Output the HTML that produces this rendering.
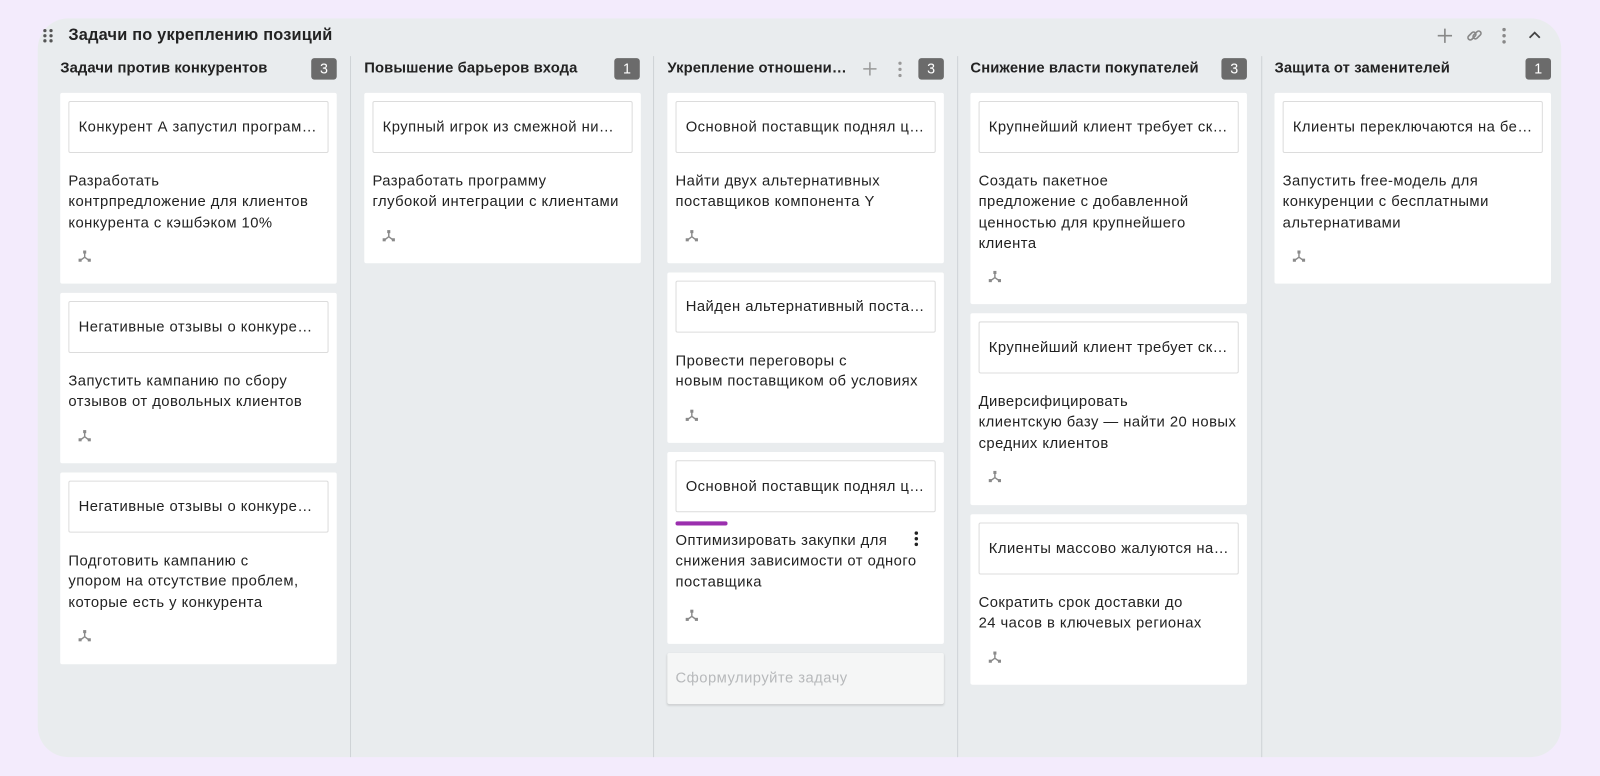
<!DOCTYPE html>
<html><head><meta charset="utf-8">
<style>
*{box-sizing:border-box;margin:0;padding:0}
body{width:1600px;height:775px;background:#f3ebfc;font-family:"Liberation Sans","DejaVu Sans",sans-serif;overflow:hidden;color:#1f1f1f}
#w{position:absolute;left:0;top:0;width:1568px;height:760px;transform:scale(1.0204);transform-origin:0 0}
.panel{position:absolute;left:37px;top:18px;width:1493px;height:724px;background:#e9ecee;border-radius:30px}
.title{position:absolute;left:67px;top:26px;font-size:16px;font-weight:bold;color:#222;letter-spacing:0.2px}
.grip{position:absolute;left:42px;top:28px}
.sep{position:absolute;top:55px;height:687px;width:1px;background:#cfd3d6}
.ch{position:absolute;top:59px;font-size:14.5px;font-weight:bold;color:#222;white-space:nowrap;letter-spacing:0.1px}
.badge{position:absolute;top:57px;width:25px;height:21px;border-radius:3px;background:#6b6b6b;color:#fff;font-size:14px;text-align:center;line-height:21px}
.card{position:absolute;width:271px;background:#fff;border-radius:2px;padding:8px}
.box{height:51px;border:1px solid #dcdcdc;border-radius:2px;padding:0 9px;line-height:50px;font-size:14.5px;letter-spacing:0.45px;white-space:nowrap;overflow:hidden;text-overflow:ellipsis;color:#222}
.txt{margin-top:18px;font-size:14.5px;letter-spacing:0.45px;line-height:20.3px;color:#222}
.ic{display:block;margin:16px 0 0 9px}
.inp{position:absolute;left:654px;top:640px;width:271px;height:50px;background:#f5f6f6;border-radius:2px;box-shadow:0 1px 2px rgba(0,0,0,.15);font-size:14.5px;letter-spacing:0.45px;color:#b7b9bb;line-height:50px;padding-left:8px}
</style></head><body><div id="w">
<div class="panel"></div>
<svg class="grip" width="10" height="14"><g fill="#555"><circle cx="2" cy="2" r="1.6"/><circle cx="8" cy="2" r="1.6"/><circle cx="2" cy="7" r="1.6"/><circle cx="8" cy="7" r="1.6"/><circle cx="2" cy="12" r="1.6"/><circle cx="8" cy="12" r="1.6"/></g></svg>
<div class="title">Задачи по укреплению позиций</div>
<svg style="position:absolute;left:1408px;top:27px" width="16" height="16"><path d="M8 1v14M1 8h14" stroke="#888" stroke-width="1.6"/></svg>
<svg style="position:absolute;left:1437px;top:27px" width="16" height="16"><g fill="none" stroke="#888" stroke-width="1.6"><rect x="1" y="6" width="9" height="4.5" rx="2.2" transform="rotate(-45 5.5 8.25)"/><rect x="6" y="5" width="9" height="4.5" rx="2.2" transform="rotate(-45 10.5 7.25)"/></g></svg>
<svg style="position:absolute;left:1471px;top:26px" width="6" height="18"><g fill="#888"><circle cx="3" cy="3" r="1.7"/><circle cx="3" cy="9" r="1.7"/><circle cx="3" cy="15" r="1.7"/></g></svg>
<svg style="position:absolute;left:1497px;top:29px" width="14" height="10"><path d="M2 8l5-5 5 5" fill="none" stroke="#444" stroke-width="1.8"/></svg>

<div class="sep" style="left:343px"></div><div class="sep" style="left:640px"></div><div class="sep" style="left:938px"></div><div class="sep" style="left:1236px"></div>

<div class="ch" style="left:59px">Задачи против конкурентов</div><div class="badge" style="left:305px">3</div>
<div class="ch" style="left:357px">Повышение барьеров входа</div><div class="badge" style="left:602px">1</div>
<div class="ch" style="left:654px">Укрепление отношени…</div>
<svg style="position:absolute;left:845px;top:60px" width="15" height="15"><path d="M7.5 1v13M1 7.5h13" stroke="#999" stroke-width="1.5"/></svg>
<svg style="position:absolute;left:879px;top:59px" width="6" height="18"><g fill="#999"><circle cx="3" cy="3" r="1.6"/><circle cx="3" cy="9" r="1.6"/><circle cx="3" cy="15" r="1.6"/></g></svg>
<div class="badge" style="left:900px">3</div>
<div class="ch" style="left:951px">Снижение власти покупателей</div><div class="badge" style="left:1197px">3</div>
<div class="ch" style="left:1249px">Защита от заменителей</div><div class="badge" style="left:1495px">1</div>

<svg width="0" height="0" style="position:absolute"><defs><symbol id="fk" viewBox="0 0 14 12"><path d="M7 2v5M7 7L3 10M7 7l4 3" stroke="#8a8a8a" stroke-width="1.4" fill="none"/><rect x="5.5" y="0.5" width="3" height="3" fill="#8a8a8a"/><rect x="1" y="8.5" width="3" height="3" fill="#8a8a8a"/><rect x="10" y="8.5" width="3" height="3" fill="#8a8a8a"/></symbol></defs></svg>

<div class="card" style="left:59px;top:91px;height:187px"><div class="box">Конкурент А запустил программу лояльности</div><div class="txt">Разработать<br>контрпредложение для клиентов<br>конкурента с кэшбэком 10%</div><svg class="ic" width="14" height="12"><use href="#fk"/></svg></div>
<div class="card" style="left:59px;top:287px;height:167px"><div class="box">Негативные отзывы о конкуренте растут</div><div class="txt">Запустить кампанию по сбору<br>отзывов от довольных клиентов</div><svg class="ic" width="14" height="12"><use href="#fk"/></svg></div>
<div class="card" style="left:59px;top:463px;height:188px"><div class="box">Негативные отзывы о конкуренте растут</div><div class="txt">Подготовить кампанию с<br>упором на отсутствие проблем,<br>которые есть у конкурента</div><svg class="ic" width="14" height="12"><use href="#fk"/></svg></div>
<div class="card" style="left:357px;top:91px;height:167px"><div class="box">Крупный игрок из смежной ниши выходит</div><div class="txt">Разработать программу<br>глубокой интеграции с клиентами</div><svg class="ic" width="14" height="12"><use href="#fk"/></svg></div>
<div class="card" style="left:654px;top:91px;height:167px"><div class="box">Основной поставщик поднял цены на 25%</div><div class="txt">Найти двух альтернативных<br>поставщиков компонента Y</div><svg class="ic" width="14" height="12"><use href="#fk"/></svg></div>
<div class="card" style="left:654px;top:267px;height:167px"><div class="box">Найден альтернативный поставщик</div><div class="txt">Провести переговоры с<br>новым поставщиком об условиях</div><svg class="ic" width="14" height="12"><use href="#fk"/></svg></div>
<div class="card" style="left:654px;top:443px;height:188px"><div class="box">Основной поставщик поднял цены на 25%</div><div style="position:absolute;left:8px;top:68px;width:51px;height:4px;border-radius:2px;background:#9b2fae"></div><div class="txt">Оптимизировать закупки для<br>снижения зависимости от одного<br>поставщика</div><svg style="position:absolute;left:241px;top:77px" width="6" height="16"><g fill="#222"><circle cx="3" cy="2.5" r="1.7"/><circle cx="3" cy="8" r="1.7"/><circle cx="3" cy="13.5" r="1.7"/></g></svg><svg class="ic" width="14" height="12"><use href="#fk"/></svg></div>
<div class="inp">Сформулируйте задачу</div>
<div class="card" style="left:951px;top:91px;height:207px"><div class="box">Крупнейший клиент требует скидку</div><div class="txt">Создать пакетное<br>предложение с добавленной<br>ценностью для крупнейшего<br>клиента</div><svg class="ic" width="14" height="12"><use href="#fk"/></svg></div>
<div class="card" style="left:951px;top:307px;height:188px"><div class="box">Крупнейший клиент требует скидку</div><div class="txt">Диверсифицировать<br>клиентскую базу — найти 20 новых<br>средних клиентов</div><svg class="ic" width="14" height="12"><use href="#fk"/></svg></div>
<div class="card" style="left:951px;top:504px;height:167px"><div class="box">Клиенты массово жалуются на доставку</div><div class="txt">Сократить срок доставки до<br>24 часов в ключевых регионах</div><svg class="ic" width="14" height="12"><use href="#fk"/></svg></div>
<div class="card" style="left:1249px;top:91px;height:187px"><div class="box">Клиенты переключаются на бесплатные аналоги</div><div class="txt">Запустить free-модель для<br>конкуренции с бесплатными<br>альтернативами</div><svg class="ic" width="14" height="12"><use href="#fk"/></svg></div>
</div></body></html>
